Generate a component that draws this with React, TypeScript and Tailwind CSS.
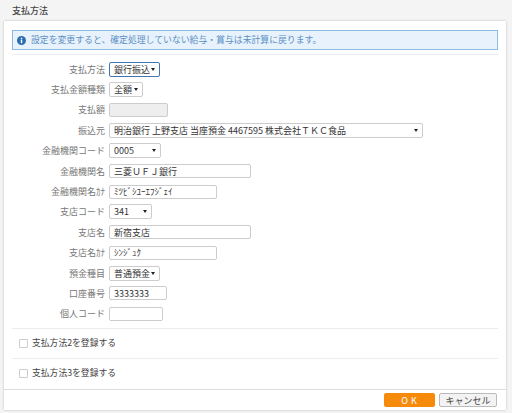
const font = { fontFamily: '"Noto Sans CJK JP", "Liberation Sans", sans-serif' };

function Row({ label, children }: { label: string; children: React.ReactNode }) {
  return (
    <div className="flex h-[20.4px] items-center">
      <div className="w-[97px] pr-[4px] text-right text-[9px] leading-none text-[#777]">{label}</div>
      {children}
    </div>
  );
}

function Select({ value, width, focus }: { value: string; width: string; focus?: boolean }) {
  return (
    <div
      className={`flex h-[15px] items-center justify-between rounded-[2px] border bg-white pl-[4px] pr-[4px] text-[9px] leading-none text-[#333] ${width} ${
        focus ? "border-[#3f76b5]" : "border-[#ccc]"
      }`}
    >
      <span className="whitespace-nowrap">{value}</span>
      <span className="h-0 w-0 border-x-[2px] border-t-[3px] border-x-transparent border-t-[#222]" />
    </div>
  );
}

function Input({ value, width, disabled }: { value?: string; width: string; disabled?: boolean }) {
  return (
    <div
      className={`flex h-[14px] items-center rounded-[2px] border border-[#ccc] pl-[4px] text-[9px] leading-none text-[#333] ${width} ${
        disabled ? "bg-[#eee]" : "bg-white"
      }`}
    >
      <span className="whitespace-nowrap">{value}</span>
    </div>
  );
}

function Check({ label }: { label: string }) {
  return (
    <div className="flex h-[30px] items-center gap-[4px] border-t border-[#ececec] pl-[7px]">
      <span className="h-[9px] w-[9px] rounded-[1px] border border-[#ccc] bg-white" />
      <span className="text-[8.8px] leading-none text-[#444]">{label}</span>
    </div>
  );
}

export default function App() {
  return (
    <div className="h-[413px] w-[512px] overflow-hidden bg-[#f4f4f4]" style={font}>
      <div className="flex h-[21px] items-center pl-[12px] pb-[1px] text-[9px] font-medium leading-none text-[#444]">支払方法</div>
      <div className="ml-[4px] flex h-[389px] w-[502px] flex-col bg-white shadow-[0_0_2px_rgba(0,0,0,0.25)]">
        <div className="flex-1 px-[8px] pt-[9px]">
          <div className="flex h-[20px] items-center gap-[5px] border border-[#8dbbe6] bg-[#e8f2fc] pl-[4px] text-[8.85px] leading-none text-[#5b8fc4]">
            <svg width="9" height="9" viewBox="0 0 10 10">
              <circle cx="5" cy="5" r="5" fill="#2a6db0" />
              <rect x="4.2" y="4" width="1.6" height="4" fill="#fff" />
              <rect x="4.2" y="2" width="1.6" height="1.4" fill="#fff" />
            </svg>
            <span className="whitespace-nowrap">設定を変更すると、確定処理していない給与・賞与は未計算に戻ります。</span>
          </div>
          <div className="mt-[4px] border-t border-[#ececec] pt-[4px]">
            <Row label="支払方法"><Select value="銀行振込" width="w-[51px]" focus /></Row>
            <Row label="支払金額種類"><Select value="全額" width="w-[34px]" /></Row>
            <Row label="支払額"><Input width="w-[59px]" disabled /></Row>
            <Row label="振込元"><Select value="明治銀行 上野支店 当座預金 4467595 株式会社ＴＫＣ食品" width="w-[314px]" /></Row>
            <Row label="金融機関コード"><Select value="0005" width="w-[52px]" /></Row>
            <Row label="金融機関名"><Input value="三菱ＵＦＪ銀行" width="w-[142px]" /></Row>
            <Row label="金融機関名ｶﾅ"><Input value="ﾐﾂﾋﾞｼﾕｰｴﾌｼﾞｪｲ" width="w-[108px]" /></Row>
            <Row label="支店コード"><Select value="341" width="w-[43px]" /></Row>
            <Row label="支店名"><Input value="新宿支店" width="w-[142px]" /></Row>
            <Row label="支店名ｶﾅ"><Input value="ｼﾝｼﾞｭｸ" width="w-[108px]" /></Row>
            <Row label="預金種目"><Select value="普通預金" width="w-[51px]" /></Row>
            <Row label="口座番号"><Input value="3333333" width="w-[58px]" /></Row>
            <Row label="個人コード"><Input width="w-[54px]" /></Row>
          </div>
          <div className="mt-[4px]">
            <Check label="支払方法2を登録する" />
            <Check label="支払方法3を登録する" />
          </div>
        </div>
        <div className="flex h-[21px] items-center justify-end gap-[4px] border-t border-[#ddd] pr-[9px]">
          <button className="h-[14px] w-[51px] rounded-[2px] bg-[#f58a0b] pl-[2px] text-[9px] leading-none tracking-[3px] text-white">OK</button>
          <button className="h-[14px] w-[58px] rounded-[2px] border border-[#bbb] bg-[#f3f3f3] text-[9px] leading-none text-[#444]">キャンセル</button>
        </div>
      </div>
    </div>
  );
}
